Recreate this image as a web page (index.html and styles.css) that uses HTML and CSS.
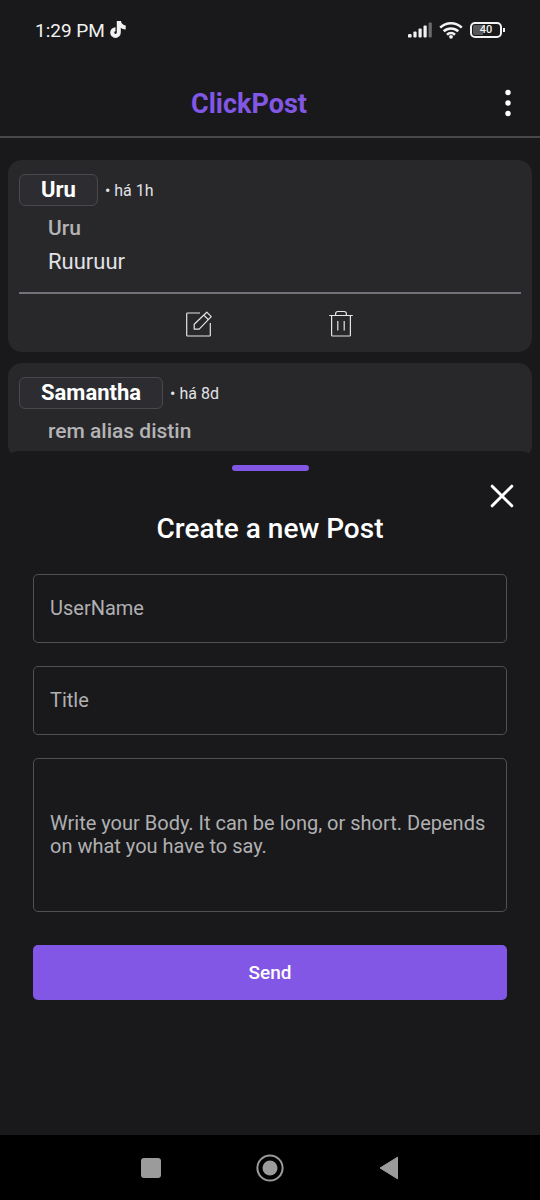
FILE: index.html
```html
<!DOCTYPE html>
<html lang="en">
<head>
<meta charset="utf-8">
<meta name="viewport" content="width=device-width, initial-scale=1">
<title>ClickPost</title>
<link rel="stylesheet" href="styles.css">
</head>
<body>
<div class="app">
  <div class="status">
    <span class="status-time">1:29 PM</span>
    <svg class="status-tiktok" width="18" height="20" viewBox="0 0 18 20" aria-hidden="true">
      <path d="M9.8 1v11.6a3.3 3.3 0 1 1-3.3-3.3" fill="none" stroke="#f2f2f2" stroke-width="4"/>
      <path d="M8 1h4c.3 2.600 2 4.200 4.700 4.400v4C14.600 9.400 13 8.800 11.800 7.800L8 7z" fill="#f2f2f2"/>
    </svg>
    <div class="status-icons">
      <svg width="24" height="16" viewBox="0 0 24 16" aria-hidden="true">
        <g fill="#f2f2f2">
          <rect x="0" y="12" width="3.600" height="3.600" rx="1.200"/>
          <rect x="5.400" y="9.500" width="3.200" height="6.100" rx="1"/>
          <rect x="10.500" y="6.500" width="3.200" height="9.100" rx="1"/>
          <rect x="15.500" y="3.500" width="3.200" height="12.100" rx="1"/>
          <rect x="20.600" y="0.500" width="3.200" height="15.100" rx="1" fill="#6a6a6c"/>
        </g>
      </svg>
      <svg width="24" height="18" viewBox="0 0 24 18" aria-hidden="true">
        <g fill="none" stroke="#f2f2f2" stroke-width="2.600">
          <path d="M1.200 6.600C7.300 .8 16.700 .8 22.800 6.600"/>
          <path d="M4.700 10.300C8.800 6.500 15.200 6.500 19.300 10.300"/>
          <path d="M8 13.700c2.300-2.100 5.700-2.100 8 0"/>
        </g>
        <circle cx="12" cy="15.800" r="1.900" fill="#f2f2f2"/>
      </svg>
      <div class="battery"><span class="battery-level">40</span></div>
    </div>
  </div>

  <header class="header">
    <h1 class="brand">ClickPost</h1>
    <button class="menu" type="button" aria-label="Menu">
      <svg width="20" height="32" viewBox="0 0 20 32" aria-hidden="true">
        <g fill="#fff"><circle cx="10" cy="5.500" r="2.700"/><circle cx="10" cy="16" r="2.700"/><circle cx="10" cy="26.500" r="2.700"/></g>
      </svg>
    </button>
  </header>

  <main class="main">
    <div class="feed">
      <article class="card">
        <div class="card-head"><span class="author">Uru</span><span class="age">• há 1h</span></div>
        <h2 class="card-title">Uru</h2>
        <p class="card-text">Ruuruur</p>
        <div class="actions">
          <button class="action" type="button" aria-label="Edit">
            <svg width="26" height="28" viewBox="0 0 26 28" fill="none" stroke="#e4e4e6" stroke-width="1.200" stroke-linejoin="round" aria-hidden="true">
              <path d="M14 3H1.500a.8.8 0 0 0-.8.8v21.400a.8.8 0 0 0 .8.8h22a.8.8 0 0 0 .8-.8V13"/>
              <path d="M8.200 19.200v-5L20.800 2.200l4.400 4.400-12 12.600zM17.800 5.100l4.400 4.400"/>
            </svg>
          </button>
          <button class="action" type="button" aria-label="Delete">
            <svg width="26" height="28" viewBox="0 0 26 28" fill="none" stroke="#e4e4e6" stroke-width="1.200" stroke-linejoin="round" aria-hidden="true">
              <path d="M1.200 5.500h23.600M3.600 5.500v19.700a.8.8 0 0 0 .8.8h17.200a.8.8 0 0 0 .8-.8V5.500"/>
              <path d="M7.600 5.500V3.800c0-1.500.8-2.300 2.200-2.300h6.400c1.400 0 2.200.8 2.200 2.300v1.700M9.800 11v9.500M16.200 11v9.500"/>
            </svg>
          </button>
        </div>
      </article>
      <article class="card">
        <div class="card-head"><span class="author">Samantha</span><span class="age">• há 8d</span></div>
        <h2 class="card-title">rem alias distin</h2>
      </article>
    </div>

    <section class="sheet" role="dialog" aria-labelledby="sheet-title">
      <div class="handle"></div>
      <button class="close" type="button" aria-label="Close">
        <svg width="24" height="24" viewBox="0 0 24 24" aria-hidden="true"><path d="M2.200 2.200l19.600 19.600M21.800 2.200L2.200 21.800" stroke="#fff" stroke-width="3" stroke-linecap="round"/></svg>
      </button>
      <h2 class="sheet-title" id="sheet-title">Create a new Post</h2>
      <form class="form">
        <input class="field" type="text" placeholder="UserName" aria-label="UserName">
        <input class="field" type="text" placeholder="Title" aria-label="Title">
        <textarea class="field field-body" rows="2" aria-label="Body" placeholder="Write your Body. It can be long, or short. Depends on what you have to say."></textarea>
        <button class="send" type="button">Send</button>
      </form>
    </section>
  </main>

  <nav class="navbar">
    <button class="nav-button" type="button" aria-label="Recent apps">
      <svg width="28" height="28" viewBox="0 0 28 28" aria-hidden="true"><rect x="4" y="4" width="20" height="20" rx="3" fill="#9b9b9b"/></svg>
    </button>
    <button class="nav-button" type="button" aria-label="Home">
      <svg width="28" height="28" viewBox="0 0 28 28" aria-hidden="true"><circle cx="14" cy="14" r="12.600" fill="none" stroke="#9b9b9b" stroke-width="2"/><circle cx="14" cy="14" r="7.500" fill="#9b9b9b"/></svg>
    </button>
    <button class="nav-button" type="button" aria-label="Back">
      <svg width="28" height="28" viewBox="0 0 28 28" aria-hidden="true"><path d="M5 14L22.500 3.200v21.600z" fill="#9b9b9b" stroke="#9b9b9b" stroke-linejoin="round"/></svg>
    </button>
  </nav>
</div>
</body>
</html>
```
FILE: styles.css
```css
* { box-sizing: border-box; }

body {
  margin: 0;
  background: #19191b;
  color: #fff;
  font-family: Roboto, "Liberation Sans", sans-serif;
}

h1, h2, p { margin: 0; }

button {
  padding: 0;
  border: 0;
  background: none;
  color: inherit;
  font-family: inherit;
  cursor: pointer;
}

svg { display: block; }

.app {
  display: flex;
  flex-direction: column;
  min-height: 100vh;
}

/* Status bar */
.status {
  display: flex;
  align-items: center;
  gap: 4px;
  height: 60px;
  padding: 0 38px 0 35px;
}

.status-time {
  color: #f2f2f2;
  font-size: 19px;
}

.status-icons {
  display: flex;
  align-items: center;
  gap: 7px;
  margin-left: auto;
}

.battery {
  position: relative;
  width: 32px;
  padding: 1px;
  border: 2px solid #f2f2f2;
  border-radius: 5px;
}

.battery::after {
  content: "";
  position: absolute;
  top: 4px;
  right: -5px;
  width: 2px;
  height: 4px;
  background: #f2f2f2;
}

.battery-level {
  display: block;
  border-radius: 2px;
  background: linear-gradient(to right, #58585a 40%, transparent 40%);
  color: #f2f2f2;
  font-size: 11px;
  font-weight: 500;
  line-height: 10px;
  text-align: center;
}

/* App header */
.header {
  display: flex;
  align-items: center;
  height: 78px;
  padding-bottom: 1px;
  border-bottom: 2px solid #48484b;
}

.brand {
  flex: 1;
  padding-top: 12px;
  color: #8257e5;
  font-size: 27px;
  font-weight: 700;
  line-height: 32px;
  text-align: center;
}

.menu {
  width: 42px;
  padding: 10px 22px 0 0;
}

/* Feed */
.main {
  position: relative;
  flex: 1;
  overflow: hidden;
}

.feed {
  display: flex;
  flex-direction: column;
  gap: 11px;
  padding: 22px 8px;
}

.card {
  padding: 14px 11px;
  border-radius: 14px;
  background: #28282a;
}

.card-head {
  display: flex;
  align-items: center;
  gap: 7px;
}

.author {
  padding: 0 21px;
  border: 1px solid #48484e;
  border-radius: 6px;
  background: #2d2d31;
  font-size: 22px;
  font-weight: 700;
  line-height: 30px;
}

.age {
  color: #e1e1e6;
  font-size: 16px;
}

.card-title {
  padding: 8px 29px 0;
  color: #b4b4b6;
  font-size: 21px;
  font-weight: 500;
  line-height: 28px;
}

.card-text {
  padding: 6px 29px 16px;
  color: #e1e1e6;
  font-size: 22px;
  line-height: 28px;
}

.actions {
  display: flex;
  justify-content: center;
  gap: 116px;
  padding-top: 16px;
  border-top: 2px solid #72727b;
}

/* Bottom sheet over the feed */
.sheet {
  position: absolute;
  right: 0;
  bottom: 0;
  left: 0;
  display: flex;
  flex-direction: column;
  padding: 14px 33px 135px;
  border-radius: 20px 20px 0 0;
  background: #19191b;
}

.handle {
  align-self: center;
  width: 77px;
  height: 6px;
  border-radius: 3px;
  background: #8257e5;
}

.close {
  align-self: flex-end;
  margin: 13px -7px 0 0;
}

.sheet-title {
  padding: 5px 0 29px;
  font-size: 28px;
  font-weight: 500;
  line-height: 32px;
  text-align: center;
}

.form {
  display: flex;
  flex-direction: column;
  gap: 23px;
}

.field {
  width: 100%;
  padding: 22px 16px;
  border: 1px solid #505055;
  border-radius: 5px;
  background: none;
  color: #e1e1e6;
  font-family: inherit;
  font-size: 20px;
  line-height: 23px;
}

.field::placeholder { color: #b0b0b2; opacity: 1; }

.field-body {
  display: block;
  padding: 53px 16px;
  resize: none;
  overflow: hidden;
}

.send {
  margin-top: 10px;
  padding: 16px;
  border-radius: 5px;
  background: #8257e5;
  font-size: 19px;
  font-weight: 500;
  line-height: 23px;
}

/* System navigation */
.navbar {
  display: flex;
  align-items: center;
  justify-content: center;
  gap: 91px;
  height: 65px;
  background: #000;
}
```
